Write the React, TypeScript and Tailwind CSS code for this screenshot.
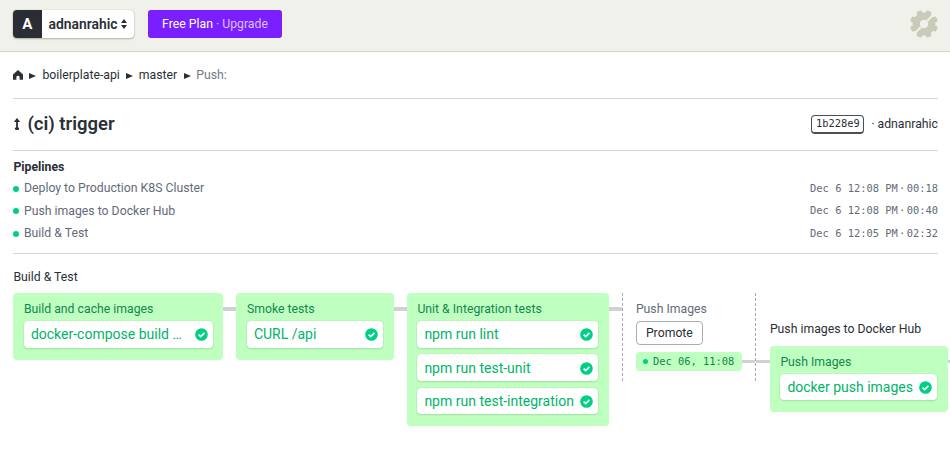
import React from "react";

const Check = () => (
  <svg viewBox="0 0 14 14" className="h-[13px] w-[13px] shrink-0">
    <circle cx="7" cy="7" r="6.8" fill="#00d084" />
    <path d="M3.9 7.2 L6.1 9.3 L10.2 5.2" fill="none" stroke="#fff" strokeWidth="1.9" />
  </svg>
);

const Job = ({ name }: { name: string }) => (
  <div className="flex h-[26.5px] items-center justify-between rounded-[4px] bg-white pt-px pr-[5px] pl-[7px] text-[14px] text-[#00b568] shadow-[0_0_1px_rgba(0,80,40,0.25),0_1px_2px_rgba(0,80,40,0.15)]">
    <span className="whitespace-nowrap">{name}</span>
    <Check />
  </div>
);

const Block = ({ title, jobs, className }: { title: string; jobs: string[]; className: string }) => (
  <div className={`shrink-0 rounded-[4px] bg-[#bfffbf] px-[10.5px] pt-[8px] pb-[12px] ${className}`}>
    <div className="h-[20px] text-[12.25px] leading-[17px] whitespace-nowrap text-[#128751]">{title}</div>
    <div className="flex flex-col gap-[6.75px]">
      {jobs.map((j) => (
        <Job key={j} name={j} />
      ))}
    </div>
  </div>
);

const Link = ({ className }: { className: string }) => <div className={`h-[3.5px] shrink-0 bg-[#d0d1d4] ${className}`} />;

const Dash = () => (
  <div className="h-[88px] w-px shrink-0 bg-[repeating-linear-gradient(to_bottom,#a5a9b0_0_3px,transparent_3px_5px)]" />
);

const Arrow = () => (
  <svg viewBox="0 0 7 6" className="mt-px h-[6px] w-[7px]">
    <path d="M0 0 L7 3 L0 6Z" fill="#2b2f36" />
  </svg>
);

const pipelines = [
  ["Deploy to Production K8S Cluster", "00:18", "12:08"],
  ["Push images to Docker Hub", "00:40", "12:08"],
  ["Build & Test", "02:32", "12:05"],
];

export default function App() {
  return (
    <div className="h-[470px] w-[950px] overflow-hidden bg-white font-['Roboto',sans-serif] text-[12.25px] leading-[17px] text-[#2b2f36]">
      <header className="flex h-[52px] items-start border-b border-[#d3d4d2] bg-[#f1f1eb] pt-[10px] pr-[12px] pl-[13px]">
        <div className="flex h-[28px] w-[121px] overflow-hidden rounded-[4px] bg-white shadow-[0_0_1px_rgba(0,0,0,0.3),0_1px_2px_rgba(0,0,0,0.25)]">
          <div className="flex w-[28.5px] items-center justify-center bg-[#2b2d34] text-[15px] font-bold text-white">A</div>
          <div className="flex items-center pl-[7px] text-[13.9px] font-semibold">adnanrahic</div>
          <svg viewBox="0 0 6 10" className="mt-[9px] ml-[3px] h-[10px] w-[6px]">
            <path d="M3 0 L6 4 H0Z M0 6 H6 L3 10Z" fill="#2b2d34" />
          </svg>
        </div>
        <div className="ml-[14px] flex h-[28px] w-[134px] items-center justify-center rounded-[3px] bg-[#7a1fff] text-[12.25px] whitespace-pre text-[#d9c0ff]">
          <span className="text-white">Free Plan</span> · Upgrade
        </div>
        <svg viewBox="0 0 28 28" className="ml-auto h-[28px] w-[28px]">
          <g fill="#c9cab8">
            <circle cx="14" cy="14" r="11.4" />
            {[22.5, 67.5, 112.5, 157.5, 202.5, 247.5, 292.5, 337.5].map((a) => (
              <rect key={a} x="11.2" y="0" width="5.6" height="6" rx="1.8" transform={`rotate(${a} 14 14)`} />
            ))}
          </g>
          <circle cx="14" cy="14" r="4.2" fill="#f1f1eb" />
          <path d="M3 25 L11 17 M17 11 L25 3" stroke="#f1f1eb" strokeWidth="2.1" />
        </svg>
      </header>

      <main className="pl-[13.4px]">
        <div className="mr-[12px]">
          <nav className="flex h-[46px] items-center">
            <svg viewBox="0 0 10 10" className="h-[10px] w-[10px]">
              <path d="M5 0 L10 4.4 V9.7 H6.6 V6.5 Q5 5.2 3.4 6.5 V9.7 H0 V4.4Z" fill="#2b2f36" />
            </svg>
            <span className="ml-[6px] flex"><Arrow /></span>
            <span className="ml-[6px]">boilerplate-api</span>
            <span className="ml-[6.5px] flex"><Arrow /></span>
            <span className="ml-[5.5px]">master</span>
            <span className="ml-[6.5px] flex"><Arrow /></span>
            <span className="ml-[5.5px] text-[#737a87]">Push:</span>
          </nav>

          <div className="flex h-[52.5px] items-center border-y border-[#d6d6d6]">
            <svg viewBox="0 0 8 12" className="h-[12px] w-[8px]">
              <path d="M4 1 V11" stroke="#2b2f36" strokeWidth="1.8" />
              <path d="M0.8 4 L4 0 L7.2 4Z" fill="#2b2f36" />
              <path d="M1.6 10 L4 9 L6.4 10 L5.5 12 H2.5Z" fill="#2b2f36" />
            </svg>
            <h1 className="ml-[6px] text-[18.5px] font-semibold">(ci) trigger</h1>
            <div className="ml-auto flex h-[19px] w-[53px] items-center justify-center rounded-[4px] border border-b-2 border-[#4a4e57] font-['DejaVu_Sans_Mono',monospace] text-[10.4px]">
              <span className="scale-y-[0.95]">1b228e9</span>
            </div>
            <span className="ml-[7px]">· adnanrahic</span>
          </div>

          <section className="h-[103.5px] border-b border-[#d6d6d6] pt-[8.5px]">
            <h2 className="mb-[1.5px] font-bold">Pipelines</h2>
            {pipelines.map(([name, took, at]) => (
              <div key={name} className="flex h-[22.5px] items-center text-[#646b78]">
                <i className="mr-[4.6px] h-[6px] w-[6px] rounded-full bg-[#00d084]" />
                {name}
                <span className="mb-px ml-auto flex scale-y-[0.95] font-['DejaVu_Sans_Mono',monospace] text-[10.4px]">
                  <span className="whitespace-pre">Dec 6 {at} PM</span>
                  <span className="w-[9px] text-center">·</span>
                  <span>{took}</span>
                </span>
              </div>
            ))}
          </section>
        </div>

        <div className="pt-[15px]">Build &amp; Test</div>
        <div className="mt-[7px] flex items-start">
          <Block title="Build and cache images" jobs={["docker-compose build …"]} className="w-[210px]" />
          <Link className="mt-[14px] w-[13px]" />
          <Block title="Smoke tests" jobs={["CURL /api"]} className="w-[157.5px]" />
          <Link className="mt-[14px] w-[13px]" />
          <Block title="Unit & Integration tests" jobs={["npm run lint", "npm run test-unit", "npm run test-integration"]} className="w-[202px]" />
          <Link className="mt-[14px] w-[13px]" />
          <Dash />
          <div className="ml-[13px] flex shrink-0 flex-col items-start pt-[8px]">
            <div className="h-[20px] text-[#646b78]">Push Images</div>
            <div className="flex h-[24px] w-[67px] items-center justify-center rounded-[4px] border border-[#a9adb5] pt-px">Promote</div>
            <div className="mt-[7px] flex h-[19px] w-[106px] items-center rounded-[4px] bg-[#bfffbf] pl-[7px] font-['DejaVu_Sans_Mono',monospace] text-[10.4px] text-[#128751]">
              <i className="mr-[5px] h-[5px] w-[5px] rounded-full bg-[#00d084]" />
              <span className="scale-y-[0.95]">Dec 06, 11:08</span>
            </div>
          </div>
          <Link className="mt-[66.5px] w-[13px]" />
          <Dash />
          <Link className="mt-[66.5px] w-[14px]" />
          <div className="shrink-0 pt-[28px]">
            <div className="mb-[7.5px]">Push images to Docker Hub</div>
            <Block title="Push Images" jobs={["docker push images"]} className="w-[178px]" />
          </div>
          <Link className="mt-[66.5px] w-[4px]" />
        </div>
      </main>
    </div>
  );
}
